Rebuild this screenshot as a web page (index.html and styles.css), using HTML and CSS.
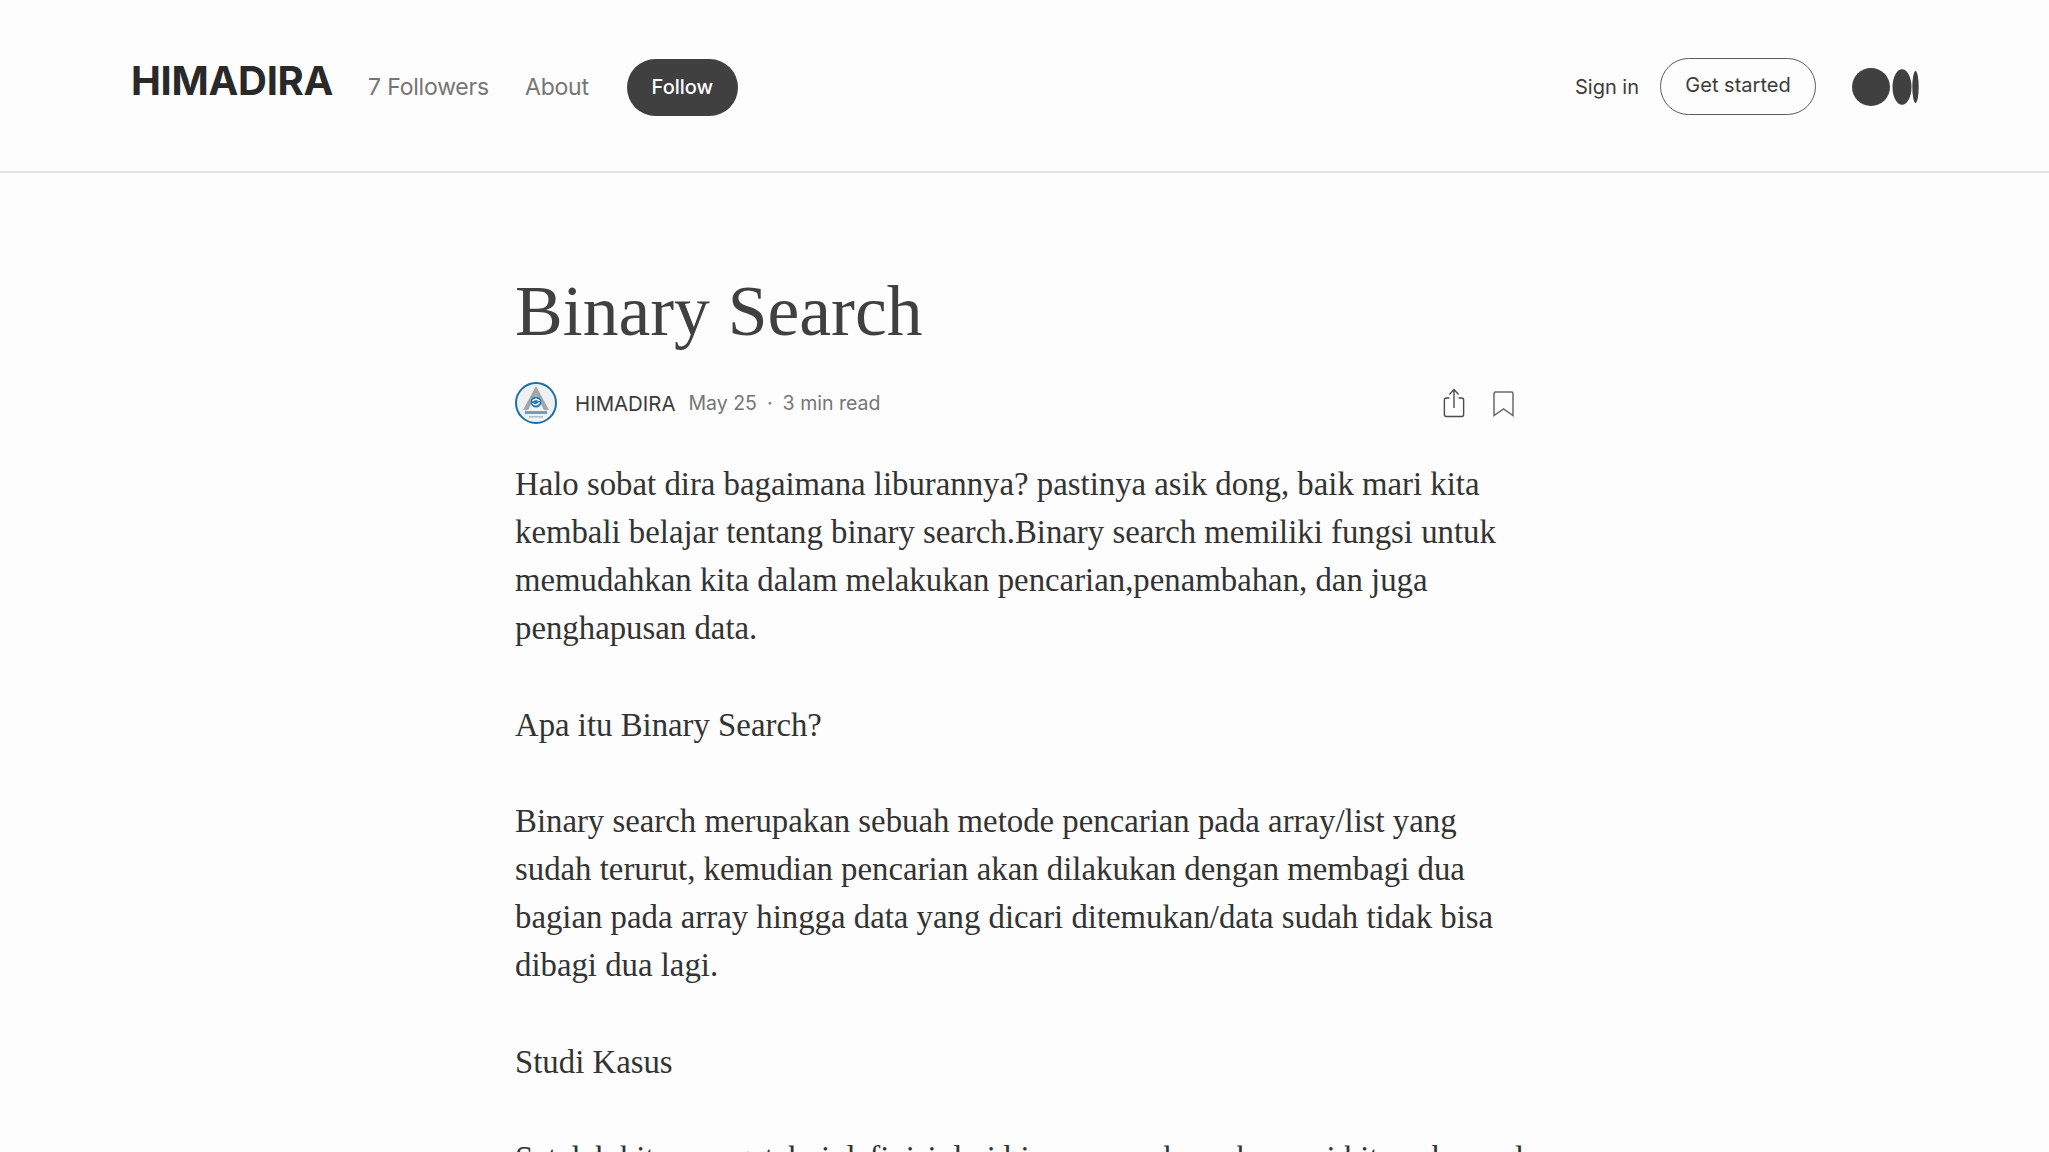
FILE: index.html
```html
<!DOCTYPE html>
<html lang="id">
<head>
    <meta charset="UTF-8">
    <title>Binary Search</title>
    <link rel="stylesheet" href="styles.css">
</head>
<body>
    <header class="topbar">
        <div class="topbar-left">
            <a class="brand">HIMADIRA</a>
            <a class="nav-link">7 Followers</a>
            <a class="nav-link nav-last">About</a>
            <a class="btn-follow">Follow</a>
        </div>
        <div class="topbar-right">
            <a class="signin">Sign in</a>
            <a class="btn-start">Get started</a>
            <svg class="logo" width="67" height="38" viewBox="0 0 67 38">
                <circle cx="19" cy="19" r="19" fill="#3f403f"/>
                <ellipse cx="50" cy="19" rx="9.5" ry="17.8" fill="#3f403f"/>
                <ellipse cx="63.5" cy="19" rx="3.2" ry="16" fill="#3f403f"/>
            </svg>
        </div>
    </header>

    <main class="article">
        <h1 class="title">Binary Search</h1>

        <div class="meta">
            <svg class="avatar" width="42" height="42" viewBox="0 0 42 42">
                <circle cx="21" cy="21" r="20" fill="#eef1f2" stroke="#1f6da3" stroke-width="2"/>
                <path d="M21 4 L8 28 H13 L21 13 L29 28 H34 Z" fill="#a4a8ab"/>
                <circle cx="21" cy="20" r="5.5" fill="#2b7cb5"/>
                <path d="M17.5 19 q3.500 -3.500 7 0 M17.5 21.500 q3.500 3 7 -1" fill="none" stroke="#fff" stroke-width="1.200"/>
                <rect x="10" y="29" width="22" height="3" fill="#6f9fc0"/>
                <rect x="14" y="34" width="14" height="1.500" fill="#a9c0d0"/>
            </svg>
            <span class="author">HIMADIRA</span>
            <span class="info">May 25</span>
            <span class="info dot">·</span>
            <span class="info">3 min read</span>
            <div class="actions">
                <svg width="22" height="30" viewBox="0 0 24 30" fill="none" stroke="#4a4a4a" stroke-width="1.500" preserveAspectRatio="none">
                    <path d="M7 10 H3.500 Q1.500 10 1.500 12 V26.500 Q1.500 28.500 3.500 28.500 H20.500 Q22.500 28.500 22.500 26.500 V12 Q22.500 10 20.500 10 H17"/>
                    <path d="M12 20 V2 M7 6.500 L12 1.500 L17 6.500"/>
                </svg>
                <svg class="bookmark" width="21" height="26" viewBox="0 0 21 26" fill="none" stroke="#6a6a6a" stroke-width="1.500">
                    <path d="M1 24.500 V2.500 Q1 1 2.500 1 H18.500 Q20 1 20 2.500 V24.500 L10.500 18 Z"/>
                </svg>
            </div>
        </div>

        <p>Halo sobat dira bagaimana liburannya? pastinya asik dong, baik mari kita kembali belajar tentang binary search.Binary search memiliki fungsi untuk memudahkan kita dalam melakukan pencarian,penambahan, dan juga penghapusan data.</p>
        <p>Apa itu Binary Search?</p>
        <p>Binary search merupakan sebuah metode pencarian pada array/list yang sudah terurut, kemudian pencarian akan dilakukan dengan membagi dua bagian pada array hingga data yang dicari ditemukan/data sudah tidak bisa dibagi dua lagi.</p>
        <p>Studi Kasus</p>
        <p>Setelah kita mengetahui definisi dari binary search, maka mari kita coba soal</p>
    </main>
</body>
</html>
```

FILE: styles.css
```css
html, body {
    height: 100%;
}

body {
    margin: 0;
    background-color: #fdfdfd;
    color: #333;
    font-family: Inter, "Liberation Sans", sans-serif;
    overflow: hidden;
}

.topbar {
    display: flex;
    justify-content: space-between;
    align-items: center;
    height: 167px;
    padding: 4px 130px 0 131px;
    border-bottom: 2px solid #e2e2e2;
    box-sizing: content-box;
}

.topbar-left, .topbar-right {
    display: flex;
    align-items: center;
}

.topbar-right {
    margin-bottom: 2px;
}

.brand {
    font-size: 40px;
    font-weight: 700;
    letter-spacing: -0.3px;
    color: #292929;
    margin-right: 35px;
    margin-bottom: 14px;
}

.nav-link {
    font-size: 23px;
    letter-spacing: -0.2px;
    color: #757575;
    margin-right: 36px;
    margin-bottom: 2px;
}

.nav-last {
    margin-right: 38px;
}

.btn-follow {
    width: 111px;
    height: 57px;
    line-height: 57px;
    text-align: center;
    border-radius: 29px;
    background-color: #3f403f;
    color: #fff;
    font-size: 20px;
    font-weight: 500;
}

.signin {
    font-size: 20px;
    color: #3b3b3b;
    margin-right: 21px;
}

.btn-start {
    box-sizing: border-box;
    width: 156px;
    height: 57px;
    line-height: 53px;
    text-align: center;
    border: 1.5px solid #5c5c5c;
    border-radius: 29px;
    font-size: 20px;
    color: #3b3b3b;
    margin-right: 36px;
}

.article {
    width: 1019px;
    margin: 0 auto;
    padding-top: 100px;
}

.title {
    margin: 0;
    font-family: "Liberation Serif", serif;
    font-weight: 400;
    font-size: 71.6px;
    line-height: 76px;
    color: #3f403f;
}

.meta {
    display: flex;
    align-items: center;
    margin-top: 33px;
    margin-bottom: 36px;
    height: 42px;
    font-size: 19.5px;
}

.avatar {
    margin-right: 18px;
}

.author {
    font-size: 20.4px;
    color: #3b3b3b;
    margin-right: 13px;
}

.info {
    color: #757575;
}

.dot {
    margin: 0 10px;
}

.actions {
    display: flex;
    align-items: center;
    gap: 28px;
    margin-left: auto;
    margin-right: 20px;
}

.bookmark {
    margin-top: 2px;
}

.article p {
    margin: 0 0 48.5px;
    font-family: "Liberation Serif", serif;
    font-size: 32.8px;
    line-height: 48px;
    color: #333;
}
```
